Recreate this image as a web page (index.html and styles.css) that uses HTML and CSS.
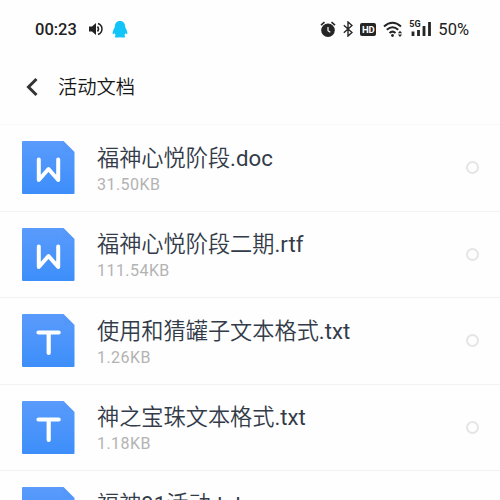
FILE: index.html
```html
<!DOCTYPE html>
<html lang="zh-CN">
<head>
<meta charset="utf-8">
<title>活动文档</title>
<link rel="stylesheet" href="styles.css">
</head>
<body>
<svg class="defs" width="0" height="0" aria-hidden="true">
  <defs>
    <linearGradient id="blue" x1="0" y1="0" x2="0" y2="1"><stop offset="0" stop-color="#5a9bfc"/><stop offset="1" stop-color="#3d8efa"/></linearGradient>
    <symbol id="sheet" viewBox="0 0 53 53"><path d="M1 0H41.5L52.5 11V52Q52.5 53 51.5 53H1Q0 53 0 52V1Q0 0 1 0Z" fill="url(#blue)"/><path d="M41.5 0L52.5 11H44Q41.5 11 41.5 8.500Z" fill="#488cf0" opacity=".15"/></symbol>
    <symbol id="word" viewBox="0 0 53 53"><use href="#sheet"/><path d="M16.800 18.500V39L26.500 28L36.200 39V18.500" fill="none" stroke="#fff" stroke-width="4" stroke-linecap="round" stroke-linejoin="round"/></symbol>
    <symbol id="text" viewBox="0 0 53 53"><use href="#sheet"/><path d="M16.500 18.500H36.700M26.700 18.500V39" fill="none" stroke="#fff" stroke-width="4.200" stroke-linecap="round"/></symbol>
  </defs>
</svg>
<div class="status">
  <span class="clock">00:23</span>
  <svg class="sound" width="14" height="14" viewBox="0 0 14 14"><path d="M0 4.500H3L7 1V13L3 9.500H0Z" fill="#222"/><path d="M8.500 4.500Q10.500 7 8.500 9.500M9 1.500C14.300 3.500 14.300 10.500 9 12.500" fill="none" stroke="#222" stroke-width="1.500"/></svg>
  <svg class="penguin" width="16" height="17" viewBox="0 0 16 17"><path d="M8 0C4.500 0 2.800 2.500 2.900 6C2 8 .2 10.500.7 13C1 13.700 2 12.800 2.500 12C2.700 13 3.200 13.600 3.800 14.200C2.600 14.800 2.200 16.400 4 16.500H7L8 16L9 16.500H12C13.800 16.400 13.400 14.800 12.200 14.200C12.800 13.600 13.300 13 13.500 12C14 12.800 15 13.700 15.300 13C15.800 10.500 14 8 13.100 6C13.200 2.500 11.500 0 8 0Z" fill="#12c4f8"/></svg>
  <div class="indicators">
    <svg width="16" height="17" viewBox="0 0 16 17"><circle cx="8" cy="9.300" r="6.800" fill="#252525"/><path d="M1 4.200L4.500 1.200M15 4.200L11.500 1.200" stroke="#252525" stroke-width="1.600"/><path d="M8 6V9.700L10.300 11.300" fill="none" stroke="#fff" stroke-width="1.200"/></svg>
    <svg class="bluetooth" width="10" height="16" viewBox="0 0 10 16"><path d="M.8 4.200L9 11.500L5 15V1L9 4.500L.8 11.800" fill="none" stroke="#252525" stroke-width="1.400"/></svg>
    <span class="hd">HD</span>
    <svg class="wifi" width="21" height="17" viewBox="0 0 21 17"><path d="M1 5.500Q9.500 -2 18 5.500M3.800 8.800Q9.500 3.600 15.200 8.800M6.500 12Q9.500 9.300 12.500 12" fill="none" stroke="#252525" stroke-width="2"/><circle cx="9.500" cy="14.500" r="1.400" fill="#252525"/><path d="M14.900 12.200L17 9.700L19.100 12.200ZM14.900 13.400L17 15.900L19.100 13.400Z" fill="#252525"/></svg>
    <div class="signal"><span class="network">5G</span><svg width="21" height="16" viewBox="0 0 21 16"><path d="M3 10.500V15M8.500 9V15M14 5V15M19.500 1V15" stroke="#252525" stroke-width="2.800"/></svg></div>
    <span class="battery">50%</span>
  </div>
</div>
<header class="topbar">
  <svg width="12" height="20" viewBox="0 0 12 20"><path d="M10.500 2L2.500 10L10.500 18" fill="none" stroke="#333" stroke-width="3"/></svg>
  <h1>活动文档</h1>
</header>
<main>
  <div class="row first"><svg class="file"><use href="#word"/></svg><div class="info"><div class="name">福神心悦阶段.doc</div><div class="size">31.50KB</div></div><span class="radio"></span></div>
  <div class="row"><svg class="file"><use href="#word"/></svg><div class="info"><div class="name">福神心悦阶段二期.rtf</div><div class="size">111.54KB</div></div><span class="radio"></span></div>
  <div class="row"><svg class="file"><use href="#text"/></svg><div class="info"><div class="name">使用和猜罐子文本格式.txt</div><div class="size">1.26KB</div></div><span class="radio"></span></div>
  <div class="row"><svg class="file"><use href="#text"/></svg><div class="info"><div class="name">神之宝珠文本格式.txt</div><div class="size">1.18KB</div></div><span class="radio"></span></div>
  <div class="row"><svg class="file"><use href="#text"/></svg><div class="info"><div class="name">福神91活动.txt</div></div><span class="radio"></span></div>
</main>
</body>
</html>
```
FILE: styles.css
```css
* { box-sizing: border-box; }
body { margin: 0; height: 500px; overflow: hidden; background: #fefefe; font-family: Roboto, "Noto Sans CJK SC DemiLight", "Noto Sans CJK SC", sans-serif; }
svg { display: block; flex: none; }
.defs { position: absolute; }
.status { display: flex; align-items: center; height: 58px; padding: 0 31px 0 35px; color: #222; }
.clock { width: 42px; padding-top: 2px; font-size: 16.5px; font-weight: 500; line-height: 20px; white-space: nowrap; }
.sound { margin-left: 12px; }
.penguin { margin-left: 9px; }
.indicators { display: flex; align-items: center; margin-left: auto; }
.bluetooth { margin-left: 7px; }
.hd { width: 16px; height: 13px; margin-left: 7px; border-radius: 2px; background: #252525; color: #fff; font-size: 9.5px; font-weight: 700; line-height: 13px; text-align: center; }
.wifi { margin-left: 7px; }
.signal { position: relative; margin-left: 6px; }
.network { position: absolute; left: -1px; top: -2px; font-size: 9px; font-weight: 700; line-height: 10px; }
.battery { margin-left: 7px; padding-top: 2px; font-size: 16.5px; line-height: 20px; }
.topbar { display: flex; align-items: center; height: 66px; padding: 0 0 8px 26px; }
h1 { margin: 1px 0 0 20px; color: #161616; font-size: 19.3px; font-weight: 400; line-height: 30px; }
.row { display: flex; height: 86.5px; padding: 16px 21px 0 22px; border-top: 1px solid #f2f2f2; }
.first { border-top-color: #f8f8f8; }
.file { width: 53px; height: 53px; }
.info { flex: 1; margin-left: 22px; padding-top: 1.5px; }
.name { color: #333b49; font-size: 22.2px; line-height: 30px; white-space: nowrap; }
.size { color: #b3b3b3; font-size: 16px; line-height: 20px; margin-top: 2px; letter-spacing: .45px; }
.radio { width: 13px; height: 13px; margin-top: 20px; border: 2px solid #e5e5e5; border-radius: 50%; }
```
